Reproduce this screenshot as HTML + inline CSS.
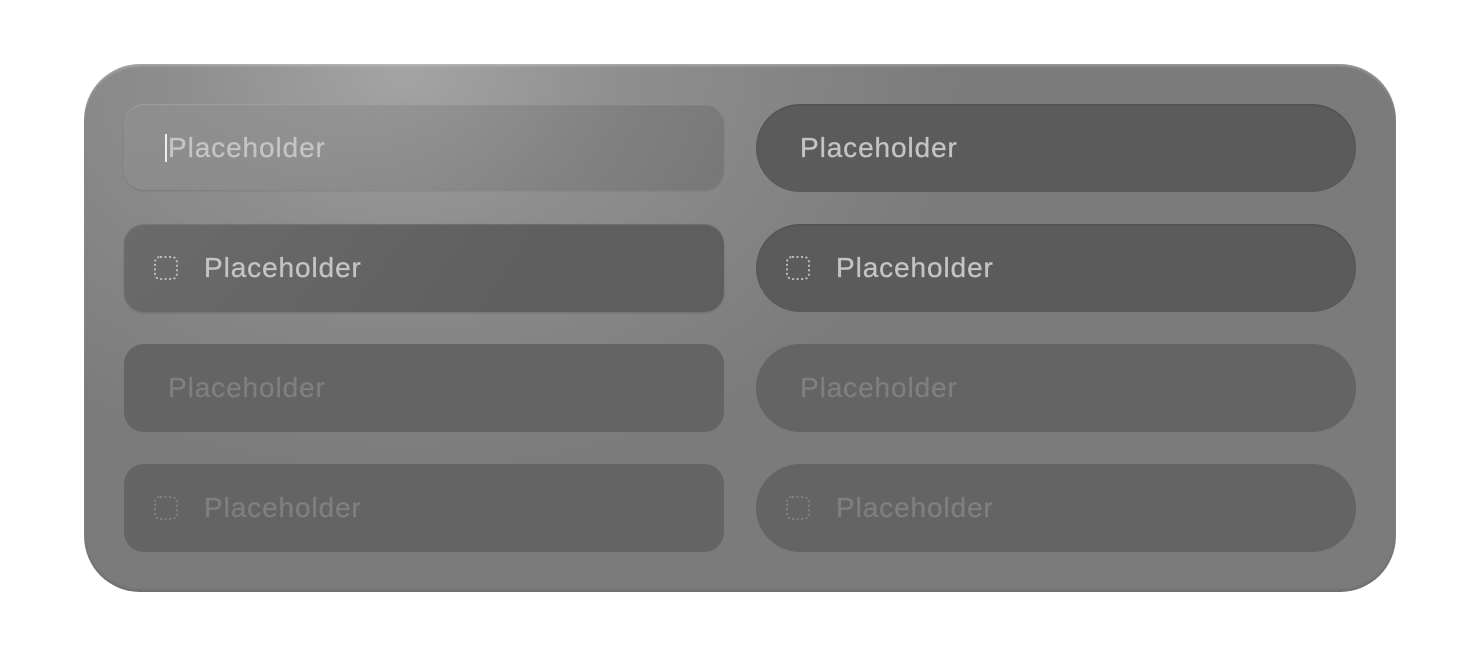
<!DOCTYPE html>
<html><head><style>
html,body{margin:0;padding:0;background:#fff;width:1464px;height:670px;overflow:hidden}
.panel{position:absolute;left:84px;top:64px;width:1312px;height:528px;border-radius:56px;
background:radial-gradient(ellipse 560px 400px at 320px 10px,#a4a4a4 0%,#8e8e8e 40%,#7b7b7b 100%);
box-shadow:inset 0 2px 2px rgba(255,255,255,0.25),inset 0 -2px 3px rgba(0,0,0,0.12);}
.f{position:absolute;width:600px;height:88px;box-sizing:border-box;font-family:"Liberation Sans",sans-serif;font-size:28px;letter-spacing:0.9px;line-height:88px;color:#c4c4c4;-webkit-text-stroke:0.3px currentColor}
.l{left:124px;border-radius:20px}
.r{left:756px;border-radius:44px}
.t1{top:104px;height:86px}.t2{top:224px}.t3{top:344px}.t4{top:464px}
.dark{background:#5b5b5b;box-shadow:inset 0 1px 2px rgba(0,0,0,0.15)}
.dis{background:#646464;color:#7f7f7f}
.f span{position:absolute;left:44px;top:0}
.f.ic span{left:80px}
.f svg{position:absolute;left:30px;top:32px}
.glass{background:linear-gradient(120deg,rgba(150,150,150,0.35),rgba(90,90,90,0.35));box-shadow:inset 0 1px 1px rgba(255,255,255,0.15),0 1px 2px rgba(0,0,0,0.12)}
.glass2{background:linear-gradient(120deg,rgba(100,100,100,0.8),#5e5e5e 70%);box-shadow:inset 0 1px 1px rgba(255,255,255,0.1),0 1px 2px rgba(0,0,0,0.15)}
.cur{position:absolute;left:41px;top:30px;width:2px;height:28px;background:#eee}
</style></head><body>
<div class="panel"></div>
<div class="f l t1 glass"><div class="cur"></div><span>Placeholder</span></div>
<div class="f r t1 dark" style="height:88px"><span>Placeholder</span></div>
<div class="f l t2 ic glass2"><svg width="24" height="24"><rect x="1" y="1" width="22" height="22" rx="5" fill="none" stroke="#bbb" stroke-width="2" stroke-dasharray="2 2.5"/></svg><span>Placeholder</span></div>
<div class="f r t2 ic dark"><svg width="24" height="24"><rect x="1" y="1" width="22" height="22" rx="5" fill="none" stroke="#bbb" stroke-width="2" stroke-dasharray="2 2.5"/></svg><span>Placeholder</span></div>
<div class="f l t3 dis"><span>Placeholder</span></div>
<div class="f r t3 dis"><span>Placeholder</span></div>
<div class="f l t4 ic dis"><svg width="24" height="24"><rect x="1" y="1" width="22" height="22" rx="5" fill="none" stroke="#808080" stroke-width="2" stroke-dasharray="2 2.5"/></svg><span>Placeholder</span></div>
<div class="f r t4 ic dis"><svg width="24" height="24"><rect x="1" y="1" width="22" height="22" rx="5" fill="none" stroke="#808080" stroke-width="2" stroke-dasharray="2 2.5"/></svg><span>Placeholder</span></div>
</body></html>
